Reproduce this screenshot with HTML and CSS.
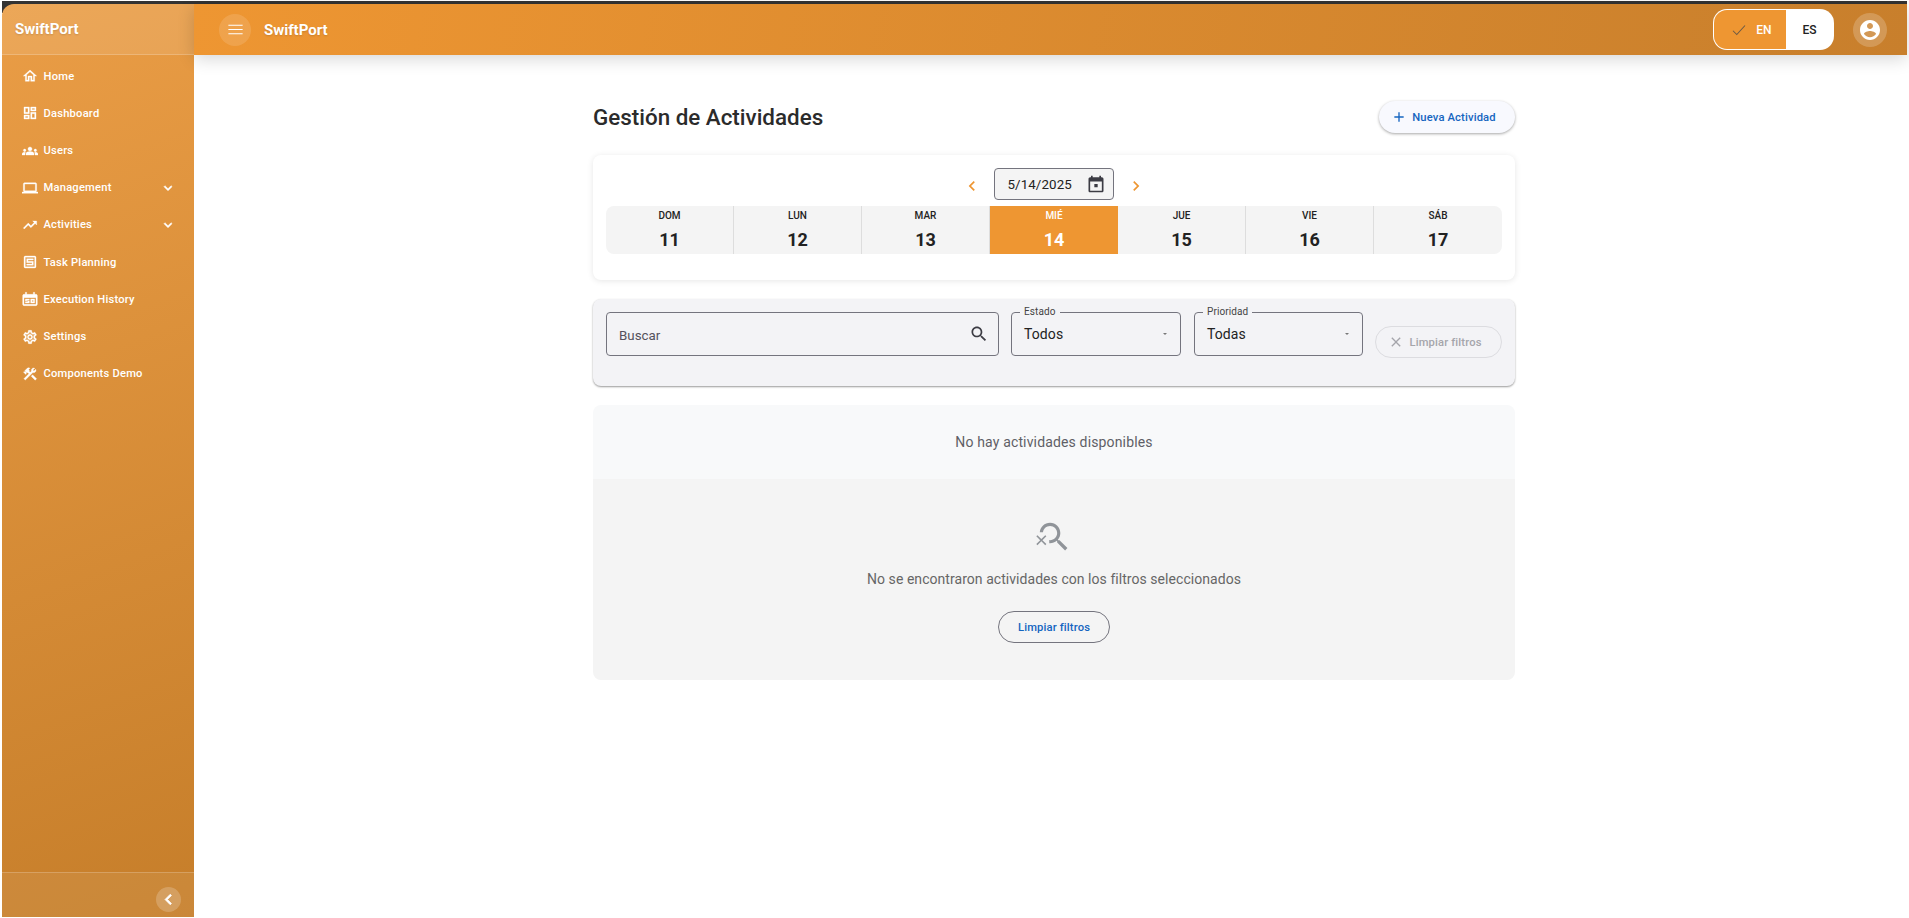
FILE: index.html
```html
<!DOCTYPE html>
<html lang="es">

<head>
    <meta charset="UTF-8">
    <meta name="viewport" content="width=device-width, initial-scale=1.0">
    <title>SwiftPort</title>
    <link rel="stylesheet" href="styles.css">
</head>

<body>
    <div class="app">
        <aside class="sidebar">
            <div class="side-head">SwiftPort</div>
            <nav class="side-nav">
                <a class="nav-item"><svg class="nav-icon" viewBox="0 0 24 24"><path d="M12 5.69l5 4.5V18h-2v-6H9v6H7v-7.81l5-4.5M12 3L2 12h3v8h6v-6h2v6h6v-8h3L12 3z"/></svg>Home</a>
                <a class="nav-item"><svg class="nav-icon" viewBox="0 0 24 24"><path d="M19 5v2h-4V5h4M9 5v6H5V5h4m10 8v6h-4v-6h4M9 17v2H5v-2h4M21 3h-8v6h8V3zM11 3H3v10h8V3zm10 8h-8v10h8V11zm-10 4H3v6h8v-6z"/></svg>Dashboard</a>
                <a class="nav-item"><svg class="nav-icon" viewBox="0 0 24 24"><path d="M12 12.75c1.63 0 3.07.39 4.24.9 1.08.48 1.76 1.56 1.76 2.73V18H6v-1.61c0-1.18.68-2.26 1.76-2.73 1.17-.52 2.61-.91 4.24-.91zM4 13c1.1 0 2-.9 2-2s-.9-2-2-2-2 .9-2 2 .9 2 2 2zm1.13 1.1c-.37-.06-.74-.1-1.13-.1-.99 0-1.93.21-2.78.58C.48 14.9 0 15.62 0 16.43V18h4.5v-1.61c0-.83.23-1.61.63-2.29zM20 13c1.1 0 2-.9 2-2s-.9-2-2-2-2 .9-2 2 .9 2 2 2zm4 3.43c0-.81-.48-1.53-1.22-1.85-.85-.37-1.79-.58-2.78-.58-.39 0-.76.04-1.13.1.4.68.63 1.46.63 2.29V18H24v-1.57zM12 6c1.66 0 3 1.34 3 3s-1.34 3-3 3-3-1.34-3-3 1.34-3 3-3z"/></svg>Users</a>
                <a class="nav-item"><svg class="nav-icon" viewBox="0 0 24 24"><path d="M20 18c1.1 0 1.99-.9 1.99-2L22 6c0-1.1-.9-2-2-2H4c-1.1 0-2 .9-2 2v10c0 1.1.9 2 2 2H0v2h24v-2h-4zM4 6h16v10H4V6z"/></svg>Management<svg class="nav-more" viewBox="0 0 24 24"><path d="M16.59 8.59L12 13.17 7.41 8.59 6 10l6 6 6-6z"/></svg></a>
                <a class="nav-item"><svg class="nav-icon" viewBox="0 0 24 24"><path d="M16 6l2.29 2.29-4.88 4.88-4-4L2 16.59 3.41 18l6-6 4 4 6.3-6.29L22 12V6z"/></svg>Activities<svg class="nav-more" viewBox="0 0 24 24"><path d="M16.59 8.59L12 13.17 7.41 8.59 6 10l6 6 6-6z"/></svg></a>
                <a class="nav-item"><svg class="nav-icon" viewBox="0 0 24 24"><path d="M19 3H5c-1.1 0-2 .9-2 2v14c0 1.1.9 2 2 2h14c1.1 0 2-.9 2-2V5c0-1.1-.9-2-2-2zm0 16H5V5h14v14zM7 7h10v2H9v2h8v6H7v-2h8v-2H7z"/></svg>Task Planning</a>
                <a class="nav-item"><svg class="nav-icon" viewBox="0 0 24 24"><path d="M21 5h-2V2h-2v3H7V2H5v3H3c-1.1 0-2 .9-2 2v13c0 1.1.9 2 2 2h18c1.1 0 2-.9 2-2V7c0-1.1-.9-2-2-2zm0 15H3V10h18v10zM5 12h6v2H7v1h4v3H5v-2h4v-1H5zm8 0h6v6h-6zm2 2v2h2v-2z"/></svg>Execution History</a>
                <a class="nav-item"><svg class="nav-icon" viewBox="0 0 24 24"><path d="M19.43 12.98c.04-.32.07-.64.07-.98 0-.34-.03-.66-.07-.98l2.11-1.65c.19-.15.24-.42.12-.64l-2-3.46c-.09-.16-.26-.25-.44-.25-.06 0-.12.01-.17.03l-2.49 1c-.52-.4-1.08-.73-1.69-.98l-.38-2.65C14.46 2.18 14.25 2 14 2h-4c-.25 0-.46.18-.49.42l-.38 2.65c-.61.25-1.17.59-1.69.98l-2.49-1c-.06-.02-.12-.03-.18-.03-.17 0-.34.09-.43.25l-2 3.46c-.13.22-.07.49.12.64l2.11 1.65c-.04.32-.07.65-.07.98 0 .33.03.66.07.98l-2.11 1.65c-.19.15-.24.42-.12.64l2 3.46c.09.16.26.25.44.25.06 0 .12-.01.17-.03l2.49-1c.52.4 1.08.73 1.69.98l.38 2.65c.03.24.24.42.49.42h4c.25 0 .46-.18.49-.42l.38-2.65c.61-.25 1.17-.59 1.69-.98l2.49 1c.06.02.12.03.18.03.17 0 .34-.09.43-.25l2-3.46c.12-.22.07-.49-.12-.64l-2.11-1.65zm-1.98-1.71c.04.31.05.52.05.73 0 .21-.02.43-.05.73l-.14 1.13.89.7 1.08.84-.7 1.21-1.27-.51-1.04-.42-.9.68c-.43.32-.84.56-1.25.73l-1.06.43-.16 1.13-.2 1.35h-1.4l-.19-1.35-.16-1.13-1.06-.43c-.43-.18-.83-.41-1.23-.71l-.91-.7-1.06.43-1.27.51-.7-1.21 1.08-.84.89-.7-.14-1.13c-.03-.31-.05-.54-.05-.74s.02-.43.05-.73l.14-1.13-.89-.7-1.08-.84.7-1.21 1.27.51 1.04.42.9-.68c.43-.32.84-.56 1.25-.73l1.06-.43.16-1.13.2-1.35h1.39l.19 1.35.16 1.13 1.06.43c.43.18.83.41 1.23.71l.91.7 1.06-.43 1.27-.51.7 1.21-1.07.85-.89.7.14 1.13zM12 8c-2.21 0-4 1.79-4 4s1.79 4 4 4 4-1.79 4-4-1.79-4-4-4zm0 6c-1.1 0-2-.9-2-2s.9-2 2-2 2 .9 2 2-.9 2-2 2z"/></svg>Settings</a>
                <a class="nav-item"><svg class="nav-icon" viewBox="0 0 24 24"><path d="M13.78 15.3l6 6 2.11-2.16-6-6zM17.5 10c1.93 0 3.5-1.57 3.5-3.5 0-.58-.16-1.12-.41-1.6l-2.7 2.7-1.49-1.49 2.7-2.7c-.48-.25-1.02-.41-1.6-.41C15.57 3 14 4.57 14 6.5c0 .41.08.8.21 1.16l-1.85 1.85-1.78-1.78.71-.71-1.41-1.41L12 3.49c-1.17-1.17-3.07-1.17-4.24 0L4.22 7.03l1.41 1.41H2.81l-.71.71 3.54 3.54.71-.71V9.15l1.41 1.41.71-.71 1.78 1.78-7.41 7.41 2.12 2.12L16.34 9.79c.36.13.75.21 1.16.21z"/></svg>Components Demo</a>
            </nav>
            <div class="side-foot">
                <button class="collapse-btn"><svg viewBox="0 0 24 24"><path d="M15.41 7.41L14 6l-6 6 6 6 1.41-1.41L10.83 12z"/></svg></button>
            </div>
        </aside>

        <div class="main">
            <header class="topbar">
                <button class="menu-btn"><svg viewBox="0 0 24 24"><path d="M3 18h18v-1.2H3zm0-5.4h18v-1.2H3zM3 6v1.2h18V6z"/></svg></button>
                <span class="brand">SwiftPort</span>
                <div class="lang">
                    <span class="lang-opt lang-on"><svg viewBox="0 0 24 24"><path d="M4 13l5 5L20 6"/></svg>EN</span>
                    <span class="lang-opt">ES</span>
                </div>
                <button class="user-btn"><svg viewBox="0 0 24 24"><path d="M12 2C6.48 2 2 6.48 2 12s4.48 10 10 10 10-4.48 10-10S17.52 2 12 2zm0 3c1.66 0 3 1.34 3 3s-1.34 3-3 3-3-1.34-3-3 1.34-3 3-3zm0 14.2c-2.5 0-4.71-1.28-6-3.22.03-1.99 4-3.08 6-3.08 1.99 0 5.97 1.09 6 3.08-1.29 1.94-3.5 3.22-6 3.22z"/></svg></button>
            </header>

            <main class="content">
                <div class="page-head">
                    <h1>Gestión de Actividades</h1>
                    <button class="new-btn"><svg viewBox="0 0 24 24"><path d="M19 13h-6v6h-2v-6H5v-2h6V5h2v6h6v2z"/></svg>Nueva Actividad</button>
                </div>

                <section class="calendar">
                    <div class="date-row">
                        <svg class="date-arrow" viewBox="0 0 24 24"><path d="M15.41 7.41L14 6l-6 6 6 6 1.41-1.41L10.83 12z"/></svg>
                        <div class="date-input">5/14/2025<svg viewBox="0 0 24 24"><path d="M19 4h-1V2h-2v2H8V2H6v2H5c-1.11 0-1.99.9-1.99 2L3 20c0 1.1.89 2 2 2h14c1.1 0 2-.9 2-2V6c0-1.1-.9-2-2-2zm0 16H5V9h14v11zM10 12h4v4h-4z"/></svg></div>
                        <svg class="date-arrow" viewBox="0 0 24 24"><path d="M10 6L8.59 7.41 13.17 12l-4.58 4.59L10 18l6-6z"/></svg>
                    </div>
                    <div class="week">
                        <div class="day"><span>DOM</span><b>11</b></div>
                        <div class="day"><span>LUN</span><b>12</b></div>
                        <div class="day"><span>MAR</span><b>13</b></div>
                        <div class="day day-on"><span>MIÉ</span><b>14</b></div>
                        <div class="day"><span>JUE</span><b>15</b></div>
                        <div class="day"><span>VIE</span><b>16</b></div>
                        <div class="day"><span>SÁB</span><b>17</b></div>
                    </div>
                </section>

                <section class="filters">
                    <div class="box box-search">
                        <span class="placeholder">Buscar</span>
                        <svg viewBox="0 0 24 24"><path d="M15.5 14h-.79l-.28-.27C15.41 12.59 16 11.11 16 9.5 16 5.91 13.09 3 9.5 3S3 5.91 3 9.5 5.91 16 9.5 16c1.61 0 3.09-.59 4.23-1.57l.27.28v.79l5 4.99L20.49 19l-4.99-5zm-6 0C7.01 14 5 11.99 5 9.5S7.01 5 9.5 5 14 7.01 14 9.5 11.99 14 9.5 14z"/></svg>
                    </div>
                    <div class="box box-select box-estado">
                        <label>Estado</label>
                        <span>Todos</span>
                        <i class="caret"></i>
                    </div>
                    <div class="box box-select box-prioridad">
                        <label>Prioridad</label>
                        <span>Todas</span>
                        <i class="caret"></i>
                    </div>
                    <button class="clear-btn" disabled><svg viewBox="0 0 24 24"><path d="M19 6.41L17.59 5 12 10.59 6.41 5 5 6.41 10.59 12 5 17.59 6.41 19 12 13.41 17.59 19 19 17.59 13.41 12z"/></svg>Limpiar filtros</button>
                </section>

                <section class="no-data">No hay actividades disponibles</section>

                <section class="empty">
                    <svg viewBox="0 0 24 24"><path d="M15.5 14h-.79l-.28-.27C15.41 12.59 16 11.11 16 9.5 16 5.91 13.09 3 9.5 3 6.08 3 3.28 5.64 3.03 9h2.02C5.3 6.75 7.18 5 9.5 5 11.99 5 14 7.01 14 9.5S11.99 14 9.5 14c-.17 0-.33-.03-.5-.05v2.02c.17.02.33.03.5.03 1.61 0 3.09-.59 4.23-1.57l.27.28v.79l5 4.99L20.49 19l-4.99-5z"/><path d="M6.47 10.82L4 13.29l-2.47-2.47-.71.71L3.29 14 .82 16.47l.71.71L4 14.71l2.47 2.47.71-.71L4.71 14l2.47-2.47z"/></svg>
                    <p>No se encontraron actividades con los filtros seleccionados</p>
                    <button class="outline-btn">Limpiar filtros</button>
                </section>
            </main>
        </div>
    </div>
</body>

</html>
```

FILE: styles.css
```css
* {
    box-sizing: border-box;
}

html,
body {
    height: 100%;
    margin: 0;
}

body {
    background: #fff;
    font-family: Roboto, "Liberation Sans", sans-serif;
    color: #222;
    overflow: hidden;
}

button {
    font-family: inherit;
    cursor: pointer;
}

svg {
    display: block;
    fill: currentColor;
}

.app {
    display: flex;
    height: 916px;
    margin: 1px 2px 0;
    background: linear-gradient(#333 0, #333 12px, #fff 12px);
    padding-top: 3px;
}

/* sidebar */
.sidebar {
    width: 192px;
    flex: none;
    display: flex;
    flex-direction: column;
    border-top-left-radius: 12px;
    background: linear-gradient(160deg, #ea9d46 0%, #c67e2a 100%);
    color: #fff;
}

.side-head {
    height: 51px;
    flex: none;
    padding: 0 13px;
    display: flex;
    align-items: center;
    font-size: 15px;
    font-weight: 700;
    border-top-left-radius: 12px;
    background: rgba(255, 255, 255, .1);
    border-bottom: 1px solid rgba(255, 255, 255, .2);
    text-shadow: 0 1px 2px rgba(0, 0, 0, .15);
}

.side-nav {
    flex: 1;
    padding-top: 2.6px;
}

.nav-item {
    height: 37.2px;
    display: flex;
    align-items: center;
    padding-left: 20px;
    font-size: 11.2px;
    font-weight: 500;
    letter-spacing: .2px;
}

.nav-icon {
    width: 16px;
    height: 16px;
    margin-right: 5.5px;
    stroke: currentColor;
    stroke-width: .5;
}

.nav-more {
    width: 16px;
    height: 16px;
    margin-left: auto;
    margin-right: 18px;
    stroke: currentColor;
    stroke-width: .8;
}

.side-foot {
    height: 45px;
    flex: none;
    display: flex;
    align-items: center;
    justify-content: flex-end;
    padding-right: 13px;
    padding-top: 8px;
    border-top: 1px solid rgba(255, 255, 255, .2);
    background: rgba(255, 255, 255, .07);
}

.collapse-btn {
    width: 25px;
    height: 25px;
    padding: 2px;
    border: 0;
    border-radius: 50%;
    background: rgba(255, 255, 255, .2);
    color: #fff;
}

.collapse-btn svg {
    stroke: currentColor;
    stroke-width: .8;
}

/* top bar */
.main {
    flex: 1;
    min-width: 0;
    background: #fff;
    display: flex;
    flex-direction: column;
}

.topbar {
    height: 51px;
    flex: none;
    display: flex;
    align-items: center;
    padding: 0 20px 0 25px;
    background: linear-gradient(100deg, #ee9632 0%, #c87f2c 100%);
    box-shadow: 0 4px 16px rgba(0, 0, 0, .16);
    color: #fff;
    position: relative;
}

.menu-btn {
    width: 32px;
    height: 32px;
    padding: 6.5px;
    margin-right: 13px;
    border: 0;
    border-radius: 50%;
    background: rgba(255, 255, 255, .13);
    color: #fff;
}

.brand {
    font-size: 15px;
    font-weight: 700;
    text-shadow: 0 1px 2px rgba(0, 0, 0, .15);
}

.lang {
    margin-left: auto;
    width: 121px;
    height: 41px;
    display: flex;
    border: 1px solid rgba(255, 255, 255, .6);
    border-radius: 14px;
    overflow: hidden;
    font-size: 12px;
    font-weight: 500;
    background: #fff;
    color: #222;
}

.lang-opt {
    flex: 1;
    display: flex;
    align-items: center;
    justify-content: center;
}

.lang-on {
    flex: none;
    width: 72px;
    background: #ee9632;
    color: #fff;
    padding-left: 2px;
}

.lang-on svg {
    width: 18px;
    height: 18px;
    margin-right: 8px;
    fill: none;
    stroke: #6b5a45;
    stroke-width: 1.4;
}

.user-btn {
    width: 34px;
    height: 34px;
    padding: 5px;
    margin-left: 19px;
    border: 0;
    border-radius: 50%;
    background: rgba(255, 255, 255, .2);
    color: #fff;
}

/* page */
.content {
    width: 922px;
    margin-left: 399px;
}

.page-head {
    height: 100px;
    display: flex;
    align-items: center;
    justify-content: space-between;
    padding-top: 24px;
}

h1 {
    margin: 0;
    font-size: 22.4px;
    font-weight: 500;
    color: #2b2b2b;
}

.new-btn {
    width: 136px;
    height: 32px;
    padding: 0 7px 0 0;
    display: flex;
    align-items: center;
    justify-content: center;
    gap: 5px;
    border: 0;
    border-radius: 16px;
    background: #f8f9fe;
    box-shadow: 0 1px 3px rgba(0, 0, 0, .35);
    color: #1565c0;
    font-size: 11.2px;
    font-weight: 500;
    letter-spacing: .15px;
}

.new-btn svg {
    width: 16px;
    height: 16px;
}

.calendar {
    height: 125px;
    padding: 13px 13px 0;
    border-radius: 8px;
    background: #fff;
    box-shadow: 0 1px 6px rgba(0, 0, 0, .1);
}

.date-row {
    height: 38px;
    padding-right: 1px;
    display: flex;
    justify-content: center;
    gap: 12px;
}

.date-arrow {
    width: 20px;
    height: 20px;
    margin-top: 8px;
    color: #ee9632;
}

.date-input {
    width: 120px;
    height: 32px;
    padding: 0 7px 0 13px;
    display: flex;
    align-items: center;
    justify-content: space-between;
    border: 1px solid #74747e;
    border-radius: 4px;
    background: #f4f4f4;
    font-size: 13.33px;
    letter-spacing: .1px;
}

.date-input svg {
    width: 20px;
    height: 20px;
    color: #3c3c44;
}

.week {
    height: 48px;
    display: grid;
    grid-template-columns: repeat(7, 1fr);
    border-radius: 8px;
    overflow: hidden;
    background: #f4f4f4;
}

.day {
    display: flex;
    flex-direction: column;
    align-items: center;
    border-right: 1px solid #ddd;
}

.day:last-child {
    border-right: 0;
}

.day span {
    margin-top: 3px;
    font-size: 10px;
    line-height: 14px;
    font-weight: 500;
}

.day b {
    margin-top: 5px;
    font-size: 18px;
    line-height: 24px;
    font-weight: 700;
}

.day-on {
    background: #ee9632;
    color: #fff;
    border-right: 0;
}

.filters {
    height: 87px;
    margin-top: 19px;
    padding: 13px 13px 0;
    display: flex;
    align-items: flex-start;
    gap: 12px;
    border-radius: 8px;
    background: #f3f3f6;
    box-shadow: 0 1px 2px rgba(0, 0, 0, .4);
}

.box {
    height: 44px;
    display: flex;
    align-items: center;
    justify-content: space-between;
    position: relative;
    border: 1px solid #74747e;
    border-radius: 4px;
    font-size: 14px;
}

.box-search {
    width: 393px;
    padding: 2px 9px 0 12px;
}

.box-search svg {
    width: 20px;
    height: 20px;
    margin-top: -2px;
    color: #3c3c44;
}

.placeholder {
    color: #55525c;
    font-size: 13.33px;
}

.box-select {
    padding: 0 12px;
    letter-spacing: .1px;
}

.box-estado {
    width: 170px;
}

.box-prioridad {
    width: 169px;
    margin-left: 1px;
}

/* label sits in the notch of the outline */
.box-select label {
    position: absolute;
    top: -7px;
    left: 8px;
    padding: 0 4px;
    background: #f3f3f6;
    font-size: 10px;
    line-height: 12px;
    color: #444;
}

.caret {
    width: 0;
    height: 0;
    margin-right: 1px;
    border: 2px solid transparent;
    border-top-color: #777;
    border-bottom: 0;
}

.clear-btn {
    width: 127px;
    height: 32px;
    margin-top: 14px;
    padding: 0 7px 0 0;
    display: flex;
    align-items: center;
    justify-content: center;
    gap: 5px;
    border: 1px solid #dcdce0;
    border-radius: 16px;
    background: transparent;
    color: #a5a5ab;
    font-size: 11.2px;
    font-weight: 500;
    letter-spacing: .15px;
}

.clear-btn svg {
    width: 16px;
    height: 16px;
}

.no-data {
    height: 74px;
    margin-top: 19px;
    display: flex;
    align-items: center;
    justify-content: center;
    border-radius: 8px 8px 0 0;
    background: #f8f9fa;
    color: #5f5f66;
    font-size: 14px;
    letter-spacing: .15px;
}

.empty {
    height: 201px;
    padding-top: 39px;
    display: flex;
    flex-direction: column;
    align-items: center;
    border-radius: 0 0 8px 8px;
    background: #f4f4f4;
}

.empty svg {
    width: 38px;
    height: 38px;
    color: #909499;
}

.empty p {
    margin: 13px 0 0;
    font-size: 14px;
    line-height: 20px;
    color: #666;
    letter-spacing: .05px;
}

.outline-btn {
    width: 112px;
    height: 32px;
    margin-top: 22px;
    border: 1px solid #74747e;
    border-radius: 16px;
    background: transparent;
    color: #1565c0;
    font-size: 11.2px;
    font-weight: 500;
    letter-spacing: .15px;
}
```
